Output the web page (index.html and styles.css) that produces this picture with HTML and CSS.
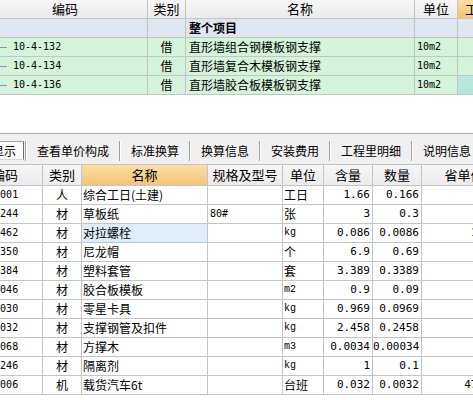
FILE: index.html
```html
<!DOCTYPE html>
<html lang="zh-CN">
<head>
<meta charset="utf-8">
<title>预算</title>
<link rel="stylesheet" href="styles.css">
</head>
<body>
<div class="grid top">
  <div class="h">编码</div><div class="h">类别</div><div class="h">名称</div><div class="h">单位</div><div class="h hl">工程量表达式</div>

  <div class="g"></div><div class="g"></div><div class="g name b">整个项目</div><div class="g"></div><div class="g"></div>

  <div class="r code"><span class="tree"></span>10-4-132</div><div class="r c">借</div><div class="r name">直形墙组合钢模板钢支撑</div><div class="r code unit">10m2</div><div class="r"></div>
  <div class="r code"><span class="tree"></span>10-4-134</div><div class="r c">借</div><div class="r name">直形墙复合木模板钢支撑</div><div class="r code unit">10m2</div><div class="r"></div>
  <div class="r code"><span class="tree"></span>10-4-136</div><div class="r c">借</div><div class="r name">直形墙胶合板模板钢支撑</div><div class="r code unit">10m2</div><div class="r teal"></div>
</div>

<div class="spacer"></div>

<div class="tabs">
  <div class="tab active"><span>工料机显示</span></div><i class="sep"></i>
  <div class="tab">查看单价构成</div><i class="sep"></i>
  <div class="tab">标准换算</div><i class="sep"></i>
  <div class="tab">换算信息</div><i class="sep"></i>
  <div class="tab">安装费用</div><i class="sep"></i>
  <div class="tab">工程里明细</div><i class="sep"></i>
  <div class="tab">说明信息</div>
</div>

<div class="grid bottom">
  <div class="h">编码</div><div class="h">类别</div><div class="h hl">名称</div><div class="h">规格及型号</div><div class="h">单位</div><div class="h">含量</div><div class="h">数量</div><div class="h">省单价</div>

  <div class="d code">04010001</div><div class="d c">人</div><div class="d name">综合工日(土建)</div><div class="d"></div><div class="d unit">工日</div><div class="d num">1.66</div><div class="d num">0.166</div><div class="d num">74.3</div>
  <div class="d code">04053244</div><div class="d c">材</div><div class="d name">草板纸</div><div class="d code spec">80#</div><div class="d unit">张</div><div class="d num">3</div><div class="d num">0.3</div><div class="d num">0.5</div>
  <div class="d code">04011462</div><div class="d c">材</div><div class="d name sel">对拉螺栓</div><div class="d"></div><div class="d mono unit">kg</div><div class="d num">0.086</div><div class="d num">0.0086</div><div class="d num">10.58</div>
  <div class="d code">04013350</div><div class="d c">材</div><div class="d name">尼龙帽</div><div class="d"></div><div class="d unit">个</div><div class="d num">6.9</div><div class="d num">0.69</div><div class="d num">0.3</div>
  <div class="d code">04015384</div><div class="d c">材</div><div class="d name">塑料套管</div><div class="d"></div><div class="d unit">套</div><div class="d num">3.389</div><div class="d num">0.3389</div><div class="d num">2.75</div>
  <div class="d code">04017046</div><div class="d c">材</div><div class="d name">胶合板模板</div><div class="d"></div><div class="d mono unit">m2</div><div class="d num">0.9</div><div class="d num">0.09</div><div class="d num">24.4</div>
  <div class="d code">04017030</div><div class="d c">材</div><div class="d name">零星卡具</div><div class="d"></div><div class="d mono unit">kg</div><div class="d num">0.969</div><div class="d num">0.0969</div><div class="d num">5.7</div>
  <div class="d code">04017032</div><div class="d c">材</div><div class="d name">支撑钢管及扣件</div><div class="d"></div><div class="d mono unit">kg</div><div class="d num">2.458</div><div class="d num">0.2458</div><div class="d num">4.5</div>
  <div class="d code">04013068</div><div class="d c">材</div><div class="d name">方撑木</div><div class="d"></div><div class="d mono unit">m3</div><div class="d num">0.0034</div><div class="d num">0.00034</div><div class="d num">1550</div>
  <div class="d code">04012246</div><div class="d c">材</div><div class="d name">隔离剂</div><div class="d"></div><div class="d mono unit">kg</div><div class="d num">1</div><div class="d num">0.1</div><div class="d num">1.9</div>
  <div class="d code">04011006</div><div class="d c">机</div><div class="d name">载货汽车6t</div><div class="d"></div><div class="d unit">台班</div><div class="d num">0.032</div><div class="d num">0.0032</div><div class="d num">478.26</div>
</div>
</body>
</html>
```

FILE: styles.css
```css
* { box-sizing: border-box; }
html, body { margin: 0; padding: 0; }
body {
  width: 473px;
  height: 400px;
  overflow: hidden;
  background: #ffffff;
  font-family: "Noto Sans CJK SC", "Noto Sans", sans-serif;
  font-size: 12px;
  color: #000;
}

.grid {
  display: grid;
  gap: 1px;
  background: #c4c4c4;
  padding-bottom: 1px;
  width: max-content;
}
.grid > div {
  white-space: nowrap;
  overflow: hidden;
}

/* top table */
.top {
  margin-left: -17px;
  grid-template-columns: 164px 37px 228px 42px 92px;
  grid-auto-rows: 18px;
}
.top > div { line-height: 18px; }
.h {
  background: linear-gradient(#f6f6f6, #ebebeb);
  text-align: center;
  font-size: 13px;
}
.h.hl { background: linear-gradient(#fbdda4, #f3c475); }
.g { background: #dfe6f0; }
.r { background: #d3f3da; }
.r.teal { background: #b8e5dc; }
.b { font-weight: bold; }
.c { text-align: center; }
.name { padding-left: 3px; }
.unit { padding-left: 2px; }
.mono {
  font-family: "Liberation Mono", "DejaVu Sans Mono", monospace;
  font-size: 10px;
}
.code {
  font-family: "DejaVu Sans Mono", "Liberation Mono", monospace;
  font-size: 10px;
}
.tree {
  display: inline-block;
  width: 24px;
  height: 1px;
  background: #909090;
  vertical-align: middle;
  margin-right: 6px;
}

.spacer { height: 38px; }

/* tab bar */
.tabs {
  display: flex;
  align-items: center;
  height: 32px;
  padding-top: 3px;
  margin-left: -53px;
  background: #f0f0f0;
  border-top: 1px solid #a8a8a8;
  border-bottom: 1px solid #c4c4c4;
  white-space: nowrap;
}
.tab {
  padding: 0 10px;
  line-height: 18px;
  flex: none;
}
.tab.active { padding: 0 1px; }
.tab.active span {
  display: inline-block;
  padding: 0 7px;
  background: #fafafa;
  border: 1px solid #a0a0a0;
  border-right-color: #707070;
  border-bottom-color: #d8d8d8;
  line-height: 17px;
}
.sep {
  flex: none;
  width: 2px;
  height: 20px;
  border-left: 1px solid #a0a0a0;
  border-right: 1px solid #ffffff;
}

/* bottom table */
.bottom {
  margin-left: -32px;
  grid-template-columns: 74px 38px 125px 74px 40px 48px 48px 84px;
  grid-template-rows: 20px;
  grid-auto-rows: 18px;
}
.bottom > .h { line-height: 20px; }
.d {
  background: #ffffff;
  line-height: 18px;
}
.bottom > .d.code { padding-left: 2px; }
.d.name { padding-left: 1px; }
.d.sel { background: #ddedfc; }
.d.unit { padding-left: 1px; }
.d.spec { padding-left: 2px; }
.num {
  text-align: right;
  padding-right: 2px;
  font-family: "DejaVu Sans Mono", "Liberation Mono", monospace;
  font-size: 11px;
}
```
